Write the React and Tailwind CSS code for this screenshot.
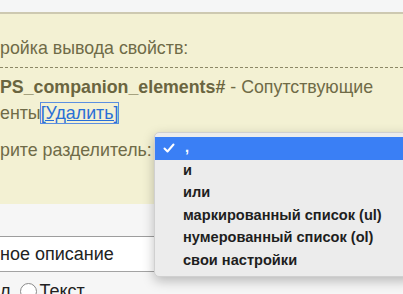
import React from "react";

const items = ["и", "или", "маркированный список (ul)", "нумерованный список (ol)", "свои настройки"];

export default function App() {
  return (
    <div className="relative w-[403px] h-[294px] overflow-hidden bg-[#f6f6f6] font-['Liberation_Sans',Arial,sans-serif]">
      <div className="h-[12px] bg-[#f5f6f6]" />
      <div className="h-[192px] bg-[#f3f1d3] border-t-2 border-[#cdc9b1] text-[#6f6b47] text-[17.8px]">
        <div className="pt-[24px] leading-[20px] whitespace-nowrap">ройка вывода свойств:</div>
        <div className="mt-[9px] border-t border-dashed border-[#8c8866] w-full" />
        <div className="mt-[9px] leading-[20px] whitespace-nowrap">
          <b className="text-[#6a6540]">PS_companion_elements#</b> - Сопутствующие
        </div>
        <div className="mt-[6px] leading-[20px] whitespace-nowrap">
          енты<span className="text-[#2a6fd6] underline outline outline-1 outline-[#5b8fe0]">[Удалить]</span>
        </div>
        <div className="mt-[17px] leading-[20px] whitespace-nowrap">рите разделитель:</div>
      </div>
      <div className="h-[33px] bg-[#f6f6f6] border-b border-[#9d9d9d]" />
      <div className="h-[35px] bg-white border-b border-[#a3a3a3] flex items-center text-[18px] text-[#222]">ное описание</div>
      <div className="flex items-center gap-[3px] pt-[9px] text-[18px] text-[#222] leading-[20px]">
        <span>л</span>
        <span className="ml-[6px] w-[17px] h-[17px] rounded-full border border-[#8a8a8a] bg-white" />
        <span>Текст</span>
      </div>

      <div className="absolute left-[154px] top-[132px] w-[260px] rounded-[5px] bg-[#ececec] shadow-[0_4px_12px_rgba(0,0,0,0.25)] border border-[#d0d0d0] py-[4px] text-[14.6px] text-[#1e1e1e]">
        <div className="h-[22.5px] bg-[#3a7ff5] text-white flex items-center">
          <svg width="12" height="10" viewBox="0 0 12 10" className="ml-[8px]">
            <path d="M1.5 5.5 L4.5 8.5 L10.5 1.5" fill="none" stroke="white" strokeWidth="2" strokeLinecap="round" strokeLinejoin="round" />
          </svg>
          <span className="ml-[10px] font-semibold">,</span>
        </div>
        {items.map((t) => (
          <div key={t} className="h-[22.5px] flex items-center pl-[28px] font-semibold">{t}</div>
        ))}
      </div>
    </div>
  );
}
